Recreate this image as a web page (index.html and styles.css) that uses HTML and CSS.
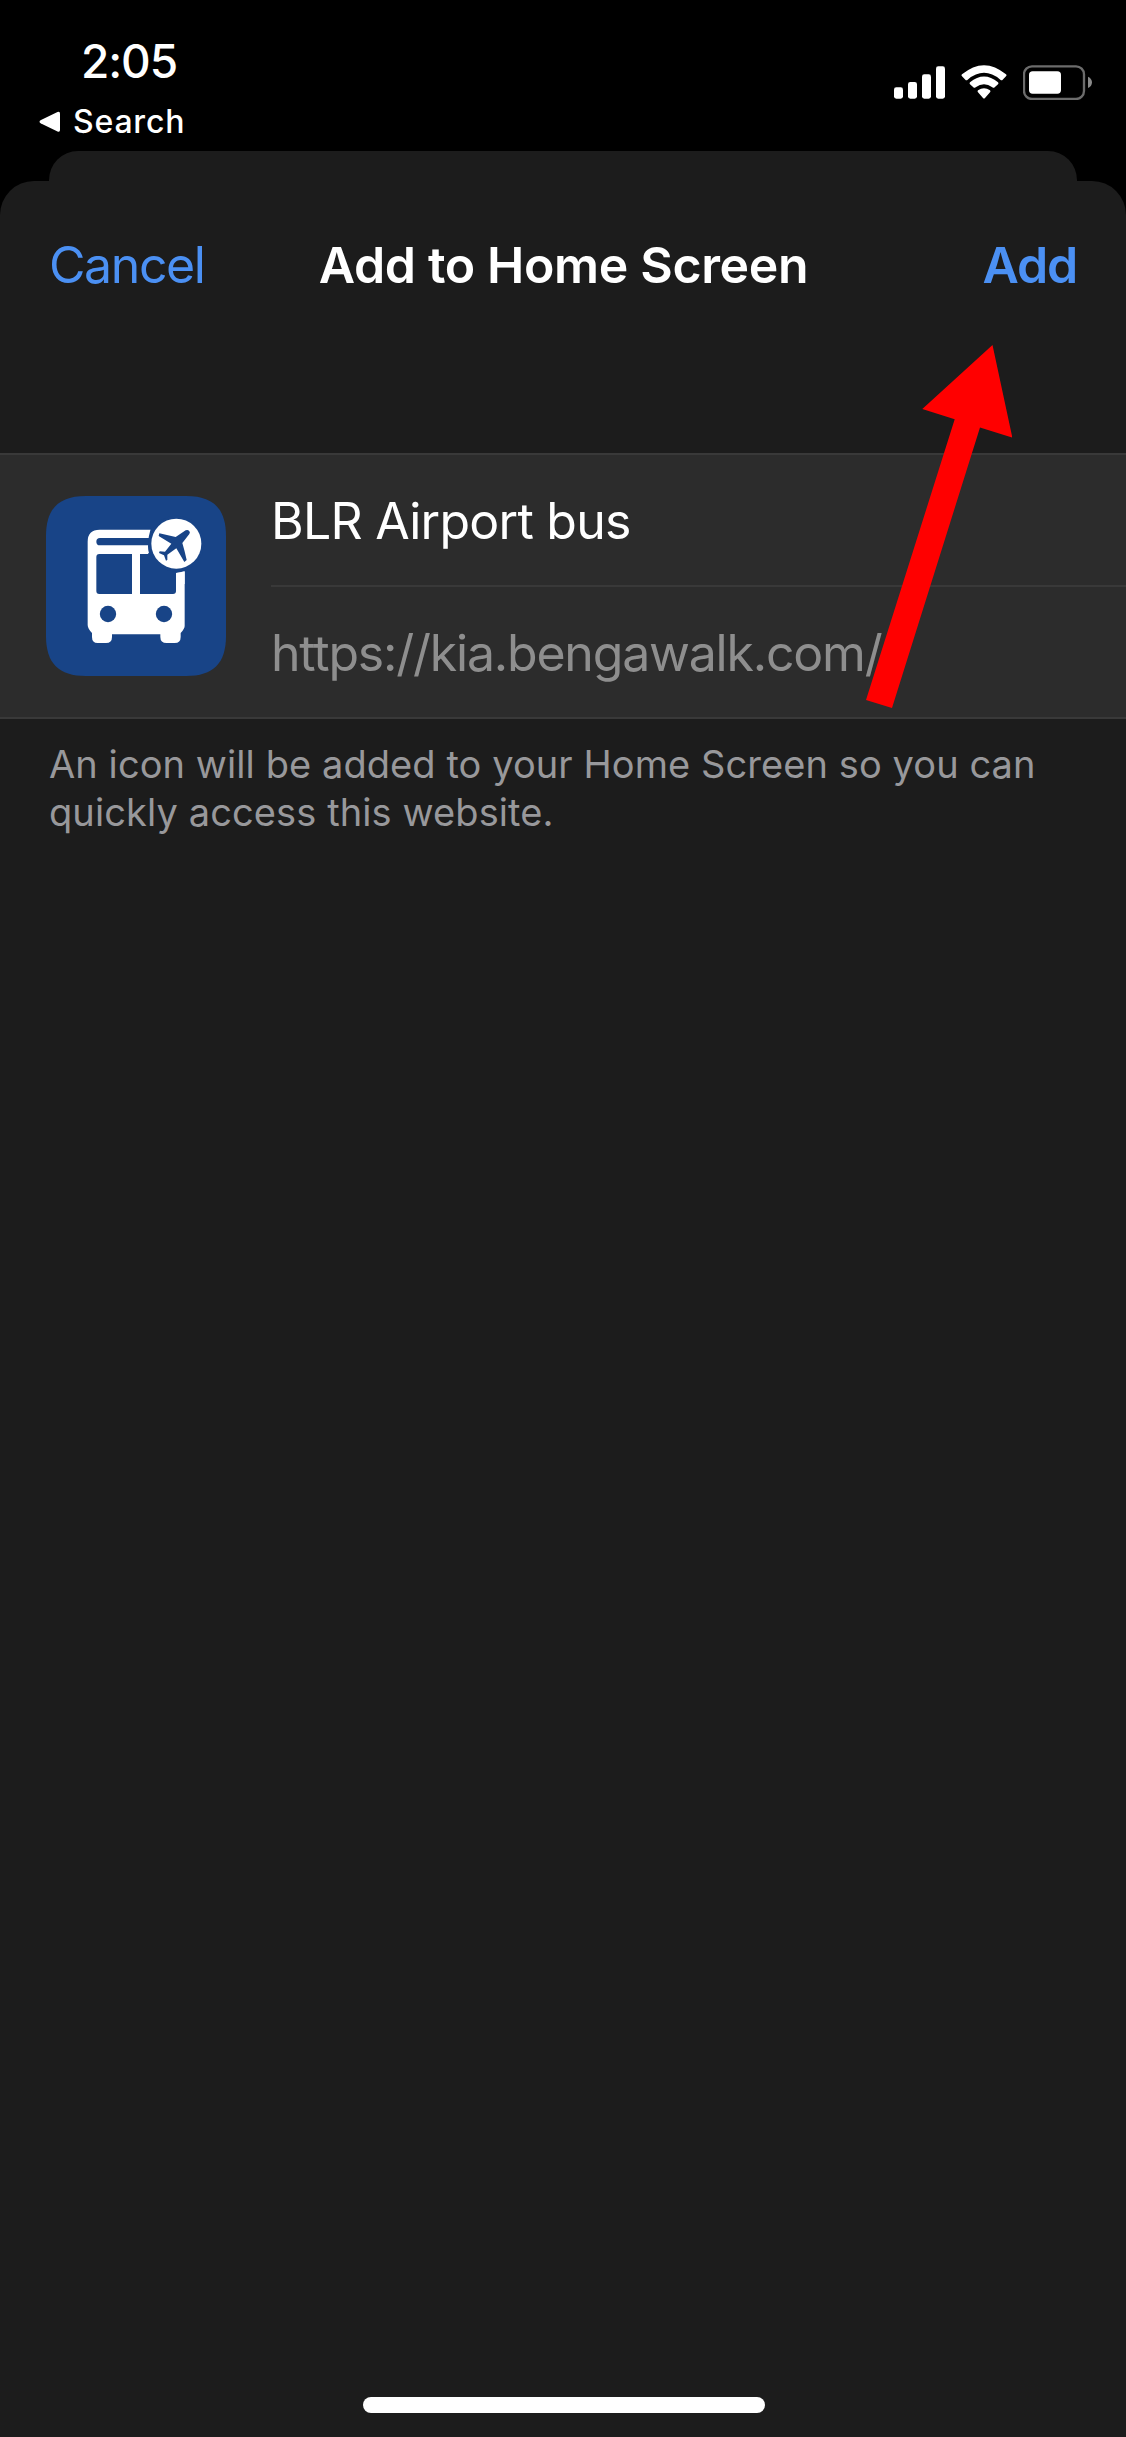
FILE: index.html
```html
<!DOCTYPE html>
<html lang="en">
<head>
<meta charset="utf-8">
<title>Add to Home Screen</title>
<link rel="stylesheet" href="styles.css">
</head>
<body>
<div class="screen">
  <header class="status">
    <div class="status-left">
      <div class="time">2:05</div>
      <div class="back">
        <svg class="back-icon" viewBox="0 0 22 22"><path d="M2 9 18.500 1Q21 0 21 2.500V19Q21 21.500 18.500 20.500L2 12.500Q-1 10.700 2 9Z" fill="#fff"/></svg>
        <span>Search</span>
      </div>
    </div>
    <div class="status-right">
      <svg width="51" height="35" viewBox="162 135 153 105" fill="#fff">
        <rect x="162" y="202" width="27" height="34" rx="7"/>
        <rect x="204" y="186" width="27" height="50" rx="7"/>
        <rect x="246" y="163" width="27" height="73" rx="7"/>
        <rect x="288" y="139" width="27" height="97" rx="7"/>
      </svg>
      <svg width="46" height="35" viewBox="363 135 138 105" fill="#fff">
        <path d="M366 163Q432 108 498 163Q501 166 498 169L488 179Q485 182 481 179Q432 138 383 179Q379 182 376 179L366 169Q363 166 366 163Z"/>
        <path d="M390 187Q432 152 474 187Q477 190 474 193L464 202Q461 205 457 202Q432 183 407 202Q403 205 400 202L390 193Q387 190 390 187Z"/>
        <path d="M414 211Q432 199 450 211Q453 214 450 217L435 234Q432 237 429 234L414 217Q411 214 414 211Z"/>
      </svg>
      <svg width="69" height="35" viewBox="549 135 207 105">
        <rect x="552" y="139" width="180" height="98" rx="24" fill="none" stroke="#6c6c6c" stroke-width="7"/>
        <rect x="567" y="154" width="96" height="67" rx="11" fill="#fff"/>
        <path d="M744 170Q756 176 756 187Q756 199 744 204Z" fill="#8a8a8a"/>
      </svg>
    </div>
  </header>
  <div class="sheet-behind"></div>
  <main class="sheet">
    <nav class="nav">
      <span class="cancel">Cancel</span>
      <span class="title">Add to Home Screen</span>
      <span class="add">Add</span>
    </nav>
    <section class="group">
      <svg class="app-icon" viewBox="78 76 540 540">
        <path d="M198 76H498C580 76 618 114 618 196V496C618 578 580 616 498 616H198C116 616 78 578 78 496V196C78 114 116 76 198 76Z" fill="#184487"/>
        <path d="M239 177H457Q494 177 494 213V466Q494 474 482 487V499Q482 517 464 517H440Q421 517 421 499V491H276V499Q276 517 258 517H233Q216 517 216 499V487Q203 474 203 463V213Q203 177 239 177Z" fill="#fff"/>
        <g fill="#184487">
          <path d="M240 202H400V224H240Q229 224 229 213Q229 202 240 202Z"/>
          <path d="M238 250H336V370H238Q229 370 229 361V259Q229 250 238 250Z"/>
          <path d="M360 250H468V361Q468 370 459 370H360Z"/>
          <circle cx="264" cy="430" r="24.500"/>
          <circle cx="432" cy="430" r="24.500"/>
          <path d="M392 174H500V303L468 307V304L384 250V228Q384 198 392 174Z"/>
        </g>
        <path d="M360 226H384Q384 238 387 248H360Z" fill="#fff"/>
        <path d="M468 307Q481 306 494 301V340H468Z" fill="#fff"/>
        <circle cx="469" cy="219" r="84" fill="#184487"/>
        <circle cx="469" cy="219" r="75" fill="#fff"/>
        <path d="M507 180Q512 184 508 190L487 217Q494 240 500 268L493 274L469 233L442 252L442 268L438 270L432 254L417 247L419 242L435 243L454 219L416 196L418 188L467 199L497 179Q503 176 507 180Z" fill="#184487"/>
      </svg>
      <div class="fields">
        <div class="field name">BLR Airport bus</div>
        <div class="field url">https://kia.bengawalk.com/</div>
      </div>
    </section>
    <p class="note">An icon will be added to your Home Screen so you can<br><span class="note-end">quickly access this website.</span></p>
    <div class="home-indicator"></div>
  </main>
  <svg class="pointer" width="146" height="363" viewBox="866 345 146 363"><path d="M992.500 345 1012.300 437.500 980 427.500 892 708 866 700 954.700 419.300 922.300 409Z" fill="#f00"/></svg>
</div>
</body>
</html>
```
FILE: styles.css
```css
* { box-sizing: border-box; }
body { margin: 0; background: #000; font-family: Inter, "Liberation Sans", sans-serif; color: #fff; }
svg { display: block; flex: none; }
.screen { position: relative; display: flex; flex-direction: column; height: 2437px; overflow: hidden; }

.status { display: flex; justify-content: space-between; height: 151px; padding: 32px 34px 0 39px; }
.status-left { display: flex; flex-direction: column; gap: 13px; padding-top: 1px; }
.time { padding-left: 42px; font-size: 46px; line-height: 56px; font-weight: 550; letter-spacing: -1.1px; }
.back { display: flex; align-items: center; gap: 12px; font-size: 32px; line-height: 40px; font-weight: 500; letter-spacing: 0.8px; }
.back-icon { width: 22px; height: 22px; }
.status-right { display: flex; gap: 16px; padding-top: 33px; }

.sheet-behind { flex: none; height: 29.5px; margin: 0 49px; background: #1c1c1c; border-radius: 29px 29px 0 0; }
.sheet { flex: 1; display: flex; flex-direction: column; background: #1c1c1c; border-radius: 34px 34px 0 0; }

.nav { display: grid; grid-template-columns: 1fr auto 1fr; height: 272.5px; padding: 54px 49px 0 49px; font-size: 50px; line-height: 60px; }
.cancel { color: #4b90f3; letter-spacing: -1.4px; }
.title { font-weight: 600; letter-spacing: -0.35px; padding-left: 1px; }
.add { justify-self: end; color: #4b90f3; font-weight: 600; letter-spacing: -1.16px; }

.group { display: flex; gap: 45px; height: 266px; padding-left: 46px; background: #2c2c2c; border: solid #393939; border-width: 2px 0; }
.app-icon { width: 180px; height: 180px; margin-top: 41px; }
.fields { flex: 1; }
.field { height: 130px; line-height: 132px; font-size: 50px; white-space: nowrap; }
.name { height: 132px; border-bottom: 2px solid #393939; letter-spacing: -0.75px; }
.url { color: #8e8e8e; letter-spacing: -1.21px; }

.note { margin: 21px 0 0 49px; font-size: 38px; line-height: 48px; letter-spacing: 0.08px; color: #98989b; white-space: nowrap; }
.note-end { letter-spacing: 0.1px; }
.home-indicator { width: 402px; height: 16px; margin: auto auto 24px 363px; border-radius: 8px; background: #fff; }

/* Annotation drawn over the sheet, pointing at the Add button */
.pointer { position: absolute; left: 866px; top: 345px; }
```
